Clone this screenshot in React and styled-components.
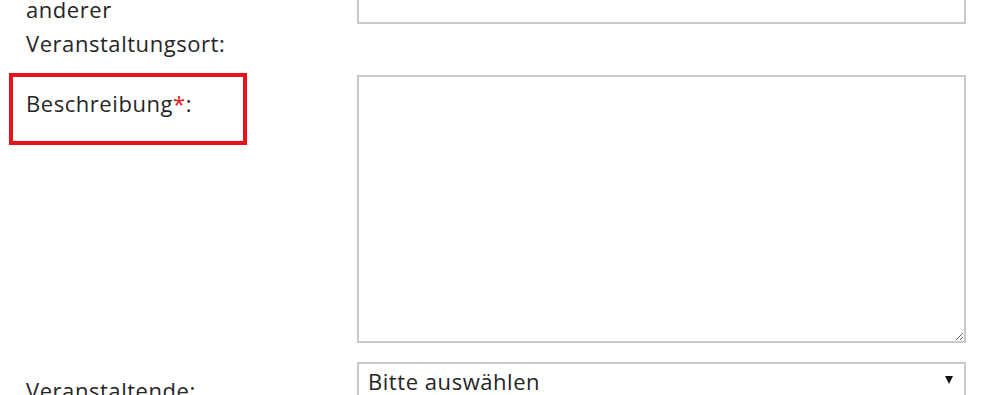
import React from "react";
import styled, { createGlobalStyle } from "styled-components";

const Global = createGlobalStyle`
  html, body {
    margin: 0;
    padding: 0;
    background: #ffffff;
  }
  body {
    width: 992px;
    height: 395px;
    overflow: hidden;
    font-family: "Open Sans", "Noto Sans", sans-serif;
    color: #262626;
  }
`;

const Form = styled.form`
  display: flex;
  flex-direction: column;
  margin-top: -12px;
`;

const Row = styled.div`
  display: grid;
  grid-template-columns: 357px 609px;
  align-items: start;
  margin-top: ${(p) => p.$gap || 0}px;
`;

const textStyle = `
  font-size: 22px;
  line-height: 34px;
  letter-spacing: 0.55px;
`;

const Label = styled.label`
  display: block;
  padding: ${(p) => p.$top || 0}px 0 0 26px;
  ${textStyle}
  width: 300px;
  white-space: nowrap;
`;

const Highlight = styled.div`
  box-sizing: border-box;
  margin-left: 9px;
  width: 238px;
  height: 72px;
  border: 4px solid #e8141c;
  padding: 9px 0 0 13px;
  white-space: nowrap;
  ${textStyle}
`;

const Required = styled.span`
  color: #e8141c;
`;

const fieldBase = `
  box-sizing: border-box;
  width: 609px;
  border: 2px solid #c9c9c9;
  background: #ffffff;
  font-family: "Open Sans", "Noto Sans", sans-serif;
  ${textStyle}
  color: #262626;
  outline: none;
  margin: 0;
`;

const TextInput = styled.input`
  ${fieldBase}
  height: 36px;
  padding: 0 9px;
`;

const TextArea = styled.textarea`
  ${fieldBase}
  display: block;
  height: 268px;
  margin-top: ${(p) => p.$top || 0}px;
  padding: 4px 9px;
  resize: both;
`;

const SelectWrap = styled.div`
  position: relative;
  width: 609px;
`;

const Select = styled.select`
  ${fieldBase}
  display: block;
  height: 38px;
  padding: 0 30px 0 9px;
  appearance: none;
  -webkit-appearance: none;
  border-radius: 0;
`;

const Arrow = styled.svg`
  position: absolute;
  right: 13px;
  top: 14px;
  pointer-events: none;
`;

export default function App() {
  return (
    <>
      <Global />
      <Form onSubmit={(e) => e.preventDefault()}>
        <Row>
          <Label $top={4} htmlFor="ort">
            anderer
            <br />
            Veranstaltungsort:
          </Label>
          <TextInput id="ort" type="text" />
        </Row>
        <Row $gap={13}>
          <Highlight>
            Beschreibung<Required>*</Required>:
          </Highlight>
          <TextArea $top={2} />
        </Row>
        <Row $gap={19}>
          <Label $top={11} htmlFor="veranstalter">
            Veranstaltende:
          </Label>
          <SelectWrap>
            <Select id="veranstalter" defaultValue="">
              <option value="">Bitte auswählen</option>
            </Select>
            <Arrow width="8" height="8" viewBox="0 0 8 8">
              <polygon points="0,0 8,0 4,8" fill="#111111" />
            </Arrow>
          </SelectWrap>
        </Row>
      </Form>
    </>
  );
}
